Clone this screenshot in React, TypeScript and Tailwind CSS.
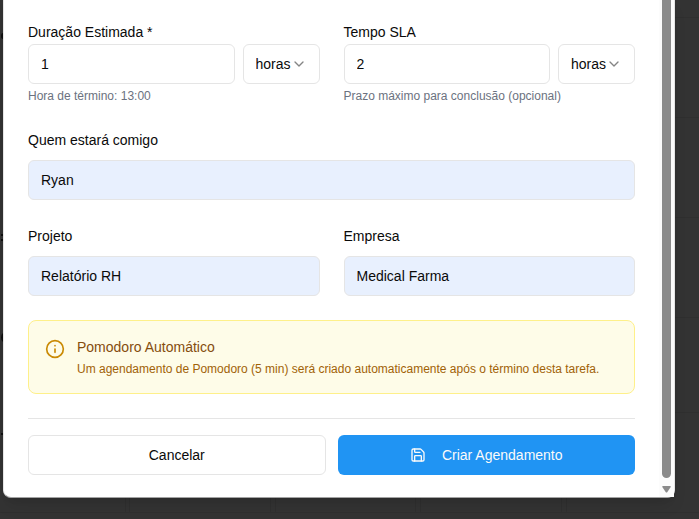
import type { ReactNode } from "react";
import { ChevronDown, Info, Save } from "lucide-react";

const control =
  "h-10 w-full min-w-0 rounded-md border border-[#e5e5e5] px-3 text-sm text-[#0a0a0a]";

function Field({ id, label, children }: { id: string; label: string; children: ReactNode }) {
  return (
    <div className="min-w-0">
      <label htmlFor={id} className="block text-sm leading-6">
        {label}
      </label>
      {children}
    </div>
  );
}

function DurationField({ id, label, value, hint }: { id: string; label: string; value: string; hint: string }) {
  return (
    <Field id={id} label={label}>
      <div className="flex gap-2">
        <input id={id} defaultValue={value} className={`${control} flex-1 bg-white`} />
        <div className="relative w-[77px] shrink-0">
          <select
            aria-label={`${label} unidade`}
            defaultValue="horas"
            className={`${control} appearance-none bg-white`}
          >
            <option value="horas">horas</option>
            <option value="minutos">minutos</option>
          </select>
          <ChevronDown className="pointer-events-none absolute top-3 right-[13px] size-4 text-[#858585]" />
        </div>
      </div>
      <p className="mt-1 text-xs text-[#6b7280]">{hint}</p>
    </Field>
  );
}

function FilledField({ id, label, value }: { id: string; label: string; value: string }) {
  return (
    <Field id={id} label={label}>
      <input id={id} defaultValue={value} className={`${control} mt-2 block bg-[#e8f0fe]`} />
    </Field>
  );
}

/* Dimmed calendar behind the dialog: one cell per day, mostly hidden. */
function Backdrop() {
  return (
    <svg className="absolute inset-0 h-full w-full" aria-hidden="true">
      <g stroke="#2f2f2f" strokeWidth="1">
        <path d="M675 17.5H2000M675 117.5H2000M675 217.5H2000M675 317.5H2000M675 412.5H2000" />
        <path d="M125.5 498v14M129.5 498v14M270.5 498v14M275.5 498v14M415.5 498v14M420.5 498v14M561.5 498v14M566.5 498v14" />
        <path d="M0 512.5H2000" />
      </g>
      <g fill="#0f0f0f">
        <path d="M3 33q-2 0-2 3t2 3zM1 234h2v2H1zM1 239h2v2H1zM3 333q-2 1-2 4.500t2 4.500zM1 433h2v2H1z" />
      </g>
    </svg>
  );
}

export default function App() {
  return (
    <div className="relative min-h-screen bg-[#333333] pr-6 pl-[3px] font-['Liberation_Sans',Arial,sans-serif] text-[#0a0a0a]">
      <Backdrop />
      <div className="relative flex rounded-b-lg border-x border-b border-x-[#e5e5e5] border-b-[#a3a3a3] bg-white shadow-lg">
        <form className="flex min-w-0 flex-1 flex-col gap-6 px-6 pt-5 pb-[22px]">
          <div className="grid grid-cols-2 gap-6">
            <DurationField id="duracao" label="Duração Estimada *" value="1" hint="Hora de término: 13:00" />
            <DurationField id="sla" label="Tempo SLA" value="2" hint="Prazo máximo para conclusão (opcional)" />
          </div>
          <FilledField id="pessoas" label="Quem estará comigo" value="Ryan" />
          <div className="grid grid-cols-2 gap-6">
            <FilledField id="projeto" label="Projeto" value="Relatório RH" />
            <FilledField id="empresa" label="Empresa" value="Medical Farma" />
          </div>
          <div className="flex gap-3 rounded-lg border border-[#fef08a] bg-[#fefce8] p-4">
            <Info className="mt-0.5 size-5 shrink-0 text-[#ca8a04]" />
            <div>
              <h4 className="text-sm text-[#854d0e]">Pomodoro Automático</h4>
              <p className="mt-1 text-xs text-[#a16207]">
                Um agendamento de Pomodoro (5 min) será criado automaticamente após o término desta tarefa.
              </p>
            </div>
          </div>
          <div className="grid grid-cols-2 gap-3 border-t border-[#e5e5e5] pt-4">
            <button type="button" className="h-10 rounded-md border border-[#e5e5e5] bg-white text-sm">
              Cancelar
            </button>
            <button
              type="submit"
              className="flex h-10 items-center justify-center gap-4 rounded-md bg-[#2094f3] text-sm text-[#fafafa]"
            >
              <Save className="size-4" />
              Criar Agendamento
            </button>
          </div>
        </form>
        <div className="flex w-[15px] shrink-0 flex-col items-center bg-[#fcfcfc]">
          <div className="w-[9px] flex-1 rounded-b-full bg-[#8b8b8b]" />
          <svg viewBox="0 0 9 8" className="mt-2 mb-1 h-[7px] w-[9px] fill-[#8b8b8b]" preserveAspectRatio="none" aria-hidden="true">
            <path d="M1 0h7q1.200 0 .7 1L5.200 7q-.7 1-1.400 0L.3 1Q-.2 0 1 0Z" />
          </svg>
        </div>
      </div>
    </div>
  );
}
